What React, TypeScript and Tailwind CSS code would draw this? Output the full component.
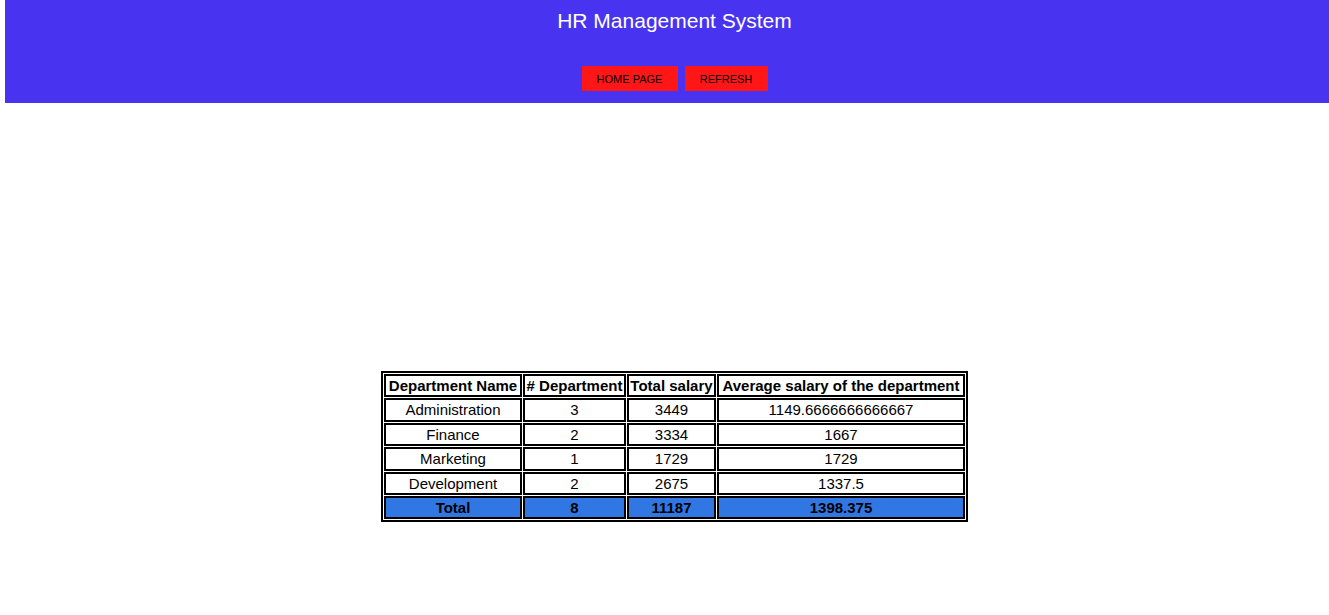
import React from "react";

interface DeptRow {
    name: string;
    count: number | string;
    total: number | string;
    avg: number | string;
}

const rows: DeptRow[] = [
    { name: "Administration", count: 3, total: 3449, avg: "1149.6666666666667" },
    { name: "Finance", count: 2, total: 3334, avg: 1667 },
    { name: "Marketing", count: 1, total: 1729, avg: 1729 },
    { name: "Development", count: 2, total: 2675, avg: "1337.5" },
];

const cell = "border-2 border-black px-[1px] py-[1px] leading-[17.4px] text-center whitespace-nowrap";

export default function App() {
    return (
        <div className="w-full min-h-[615px] overflow-hidden bg-white font-['Liberation_Sans',Arial,sans-serif]">
            <div className="ml-[5px] w-[1339px]">
                <header className="h-[103px] bg-[#4834f0] flex flex-col items-center">
                    <h1 className="pt-[9px] text-[21px] leading-[24px] text-white">HR Management System</h1>
                    <div className="mt-[33px] flex gap-[7px]">
                        <button className="h-[25px] w-[96px] pt-[1px] bg-[#ff1717] text-[11px] text-black">HOME PAGE</button>
                        <button className="h-[25px] w-[83px] pt-[1px] bg-[#ff1717] text-[11px] text-black">REFRESH</button>
                    </div>
                </header>

                <div className="flex justify-center pt-[268px]">
                    <table className="border-2 border-black border-separate border-spacing-[1px] text-[15px] text-black">
                        <thead>
                            <tr>
                                <th className={cell + " w-[138px]"}>Department Name</th>
                                <th className={cell + " w-[103px]"}>&#35; Department</th>
                                <th className={cell + " w-[89px]"}>Total salary</th>
                                <th className={cell + " w-[248px]"}>Average salary of the department</th>
                            </tr>
                        </thead>
                        <tbody>
                            {rows.map((r, idx) => (
                                <tr key={idx}>
                                    <td className={cell}>{r.name}</td>
                                    <td className={cell}>{r.count}</td>
                                    <td className={cell}>{r.total}</td>
                                    <td className={cell}>{r.avg}</td>
                                </tr>
                            ))}
                            <tr className="bg-[#3077e3] font-bold">
                                <td className={cell}>Total</td>
                                <td className={cell}>8</td>
                                <td className={cell}>11187</td>
                                <td className={cell}>1398.375</td>
                            </tr>
                        </tbody>
                    </table>
                </div>
            </div>
        </div>
    );
}
